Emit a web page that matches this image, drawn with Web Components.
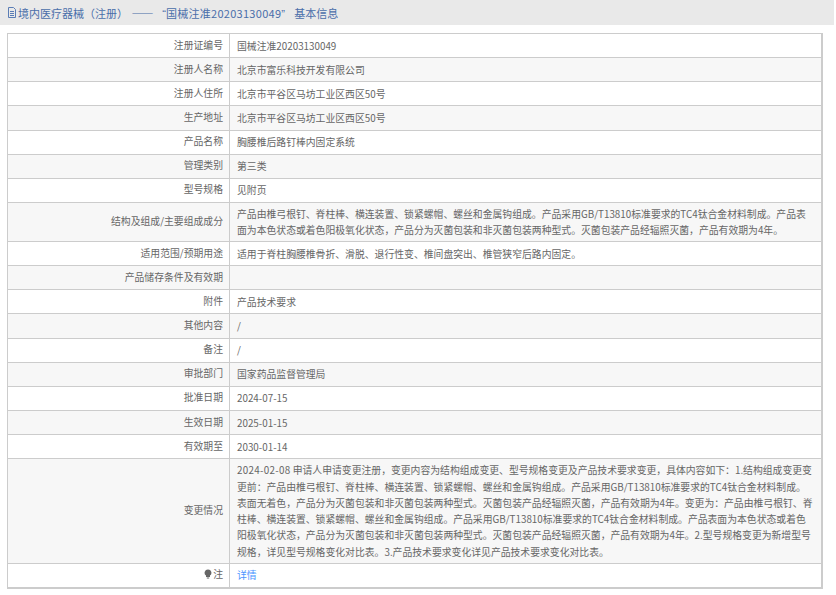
<!DOCTYPE html>
<html lang="zh">
<head>
<meta charset="utf-8">
<title>基本信息</title>
<style>
html,body{margin:0;padding:0;background:#fff;}
body{font-family:"Noto Sans CJK SC","Liberation Sans",sans-serif;overflow:hidden;}
</style>
</head>
<body>
<detail-page>
  <page-title>境内医疗器械（注册） <span class="d">——</span> <span class="q">“</span><span class="n">国械注准20203130049</span><span class="q e">”</span> 基本信息</page-title>
  <info-table>
    <info-row label="注册证编号">国械注准20203130049</info-row>
    <info-row label="注册人名称" alt>北京市富乐科技开发有限公司</info-row>
    <info-row label="注册人住所">北京市平谷区马坊工业区西区50号</info-row>
    <info-row label="生产地址" alt>北京市平谷区马坊工业区西区50号</info-row>
    <info-row label="产品名称">胸腰椎后路钉棒内固定系统</info-row>
    <info-row label="管理类别" alt>第三类</info-row>
    <info-row label="型号规格">见附页</info-row>
    <info-row label="结构及组成/主要组成成分" alt>产品由椎弓根钉、脊柱棒、横连装置、锁紧螺帽、螺丝和金属钩组成。产品采用GB/T13810标准要求的TC4钛合金材料制成。产品表<br>面为本色状态或着色阳极氧化状态，产品分为灭菌包装和非灭菌包装两种型式。灭菌包装产品经辐照灭菌，产品有效期为4年。</info-row>
    <info-row label="适用范围/预期用途">适用于脊柱胸腰椎骨折、滑脱、退行性变、椎间盘突出、椎管狭窄后路内固定。</info-row>
    <info-row label="产品储存条件及有效期" alt></info-row>
    <info-row label="附件">产品技术要求</info-row>
    <info-row label="其他内容" alt>/</info-row>
    <info-row label="备注">/</info-row>
    <info-row label="审批部门" alt>国家药品监督管理局</info-row>
    <info-row label="批准日期">2024-07-15</info-row>
    <info-row label="生效日期" alt>2025-01-15</info-row>
    <info-row label="有效期至">2030-01-14</info-row>
    <info-row label="变更情况" alt style="--lh:16.25px"><span class="date">2024-02-08</span> 申请人申请变更注册，变更内容为结构组成变更、型号规格变更及产品技术要求变更，具体内容如下：1.结构组成变更变<br>更前：产品由椎弓根钉、脊柱棒、横连装置、锁紧螺帽、螺丝和金属钩组成。产品采用GB/T13810标准要求的TC4钛合金材料制成。<br>表面无着色，产品分为灭菌包装和非灭菌包装两种型式。灭菌包装产品经辐照灭菌，产品有效期为4年。变更为：产品由椎弓根钉、脊<br>柱棒、横连装置、锁紧螺帽、螺丝和金属钩组成。产品采用GB/T13810标准要求的TC4钛合金材料制成。产品表面为本色状态或着色<br>阳极氧化状态，产品分为灭菌包装和非灭菌包装两种型式。灭菌包装产品经辐照灭菌，产品有效期为4年。2.型号规格变更为新增型号<br>规格，详见型号规格变化对比表。3.产品技术要求变化详见产品技术要求变化对比表。</info-row>
    <info-row label="注" bulb><a href="#">详情</a></info-row>
  </info-table>
</detail-page>
<script>
// 标点居中：SC 的逗号在左下角，这里换成 TC 字形
function centerPunct(el) {
  el.innerHTML = el.innerHTML.replace(/[，：（）]/g, '<span class="p">$&</span>');
}

// 页面外框
class DetailPage extends HTMLElement {
  constructor() {
    super();
    this.attachShadow({ mode: "open" }).innerHTML = `
    <style>
      :host{display:block;width:836px;height:595px;background:#fff;box-sizing:border-box;padding-right:2px;}
    </style>
    <slot></slot>`;
  }
}
customElements.define("detail-page", DetailPage);

class PageTitle extends HTMLElement {
  constructor() {
    super();
    centerPunct(this);
    this.attachShadow({ mode: "open" }).innerHTML = `
    <style>
      :host{display:flex;align-items:center;height:25px;background:#e9e9e9;padding-left:8px;
        font-size:11px;color:#4a6ea9;white-space:pre;}
      svg{width:8px;height:11px;flex:none;margin-right:2px;}
      .t{display:block;}
      ::slotted(span.p){font-family:"Noto Sans CJK TC",sans-serif;}
      ::slotted(span.d){letter-spacing:2px;margin-left:1px;}
      ::slotted(span.q){display:inline-block;width:8px;text-align:right;font-family:"Liberation Sans",sans-serif;}
      ::slotted(span.e){width:10.500px;text-align:left;}
      ::slotted(span.n){letter-spacing:.28px;}
    </style>
    <svg viewBox="0 0 8 11" fill="none" stroke="#5b7db5" stroke-width="1">
      <path d="M.5 .5h5l2 2v8h-7z"/><path d="M2 4.500h4M2 6.500h4M2 8.500h4"/>
    </svg><div class="t"><slot></slot></div>`;
  }
}
customElements.define("page-title", PageTitle);

class InfoTable extends HTMLElement {
  constructor() {
    super();
    this.attachShadow({ mode: "open" }).innerHTML = `
    <style>
      :host{display:block;margin:8px 11px 0 7px;border:1px solid #ccc;border-right-width:2px;border-bottom-width:2px;}
    </style>
    <slot></slot>`;
  }
}
customElements.define("info-table", InfoTable);

class InfoRow extends HTMLElement {
  constructor() {
    super();
    centerPunct(this);
    var label = this.getAttribute("label");
    var bulb = this.hasAttribute("bulb") ? `<svg viewBox="0 0 8 10"><path fill="#666" d="M4 .5a3.300 3.300 0 0 1 2 6v1.500H2V6.500a3.300 3.300 0 0 1 2-6zM2.800 8.600h2.400V9.500H2.800z"/></svg>` : "";
    this.attachShadow({ mode: "open" }).innerHTML = `
    <style>
      :host{display:grid;grid-template-columns:222px 1fr;background:#fff;border-bottom:1px solid #ccc;
        box-sizing:border-box;min-height:24.15px;font-size:9.83px;color:#666;white-space:nowrap;}
      :host([alt]){background:#f7f7f7;}
      :host(:last-child){border-bottom:0;min-height:23.15px;}
      .label{display:flex;align-items:center;justify-content:flex-end;gap:1px;padding:0 6px 2px 0;border-right:1px solid #ccc;}
      .value{display:flex;align-items:center;padding:3px 7px 3px 7px;line-height:var(--lh,16px);}
      svg{width:8px;height:10px;}
      ::slotted(a){color:#4a94ff;text-decoration:none;}
      ::slotted(span.p){font-family:"Noto Sans CJK TC",sans-serif;}
      ::slotted(span.date){letter-spacing:.3px;}
    </style>
    <div class="label">${bulb}<span>${label}</span></div>
    <div class="value"><div><slot></slot></div></div>`;
  }
}
customElements.define("info-row", InfoRow);
</script>
</body>
</html>
